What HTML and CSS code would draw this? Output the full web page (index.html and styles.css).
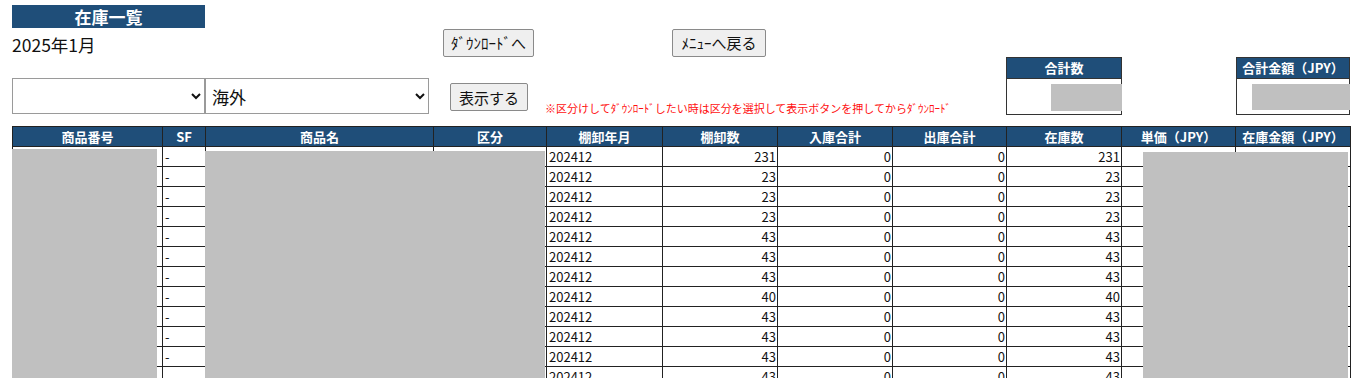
FILE: index.html
```html
<!DOCTYPE html>
<html lang="ja">
<head>
<meta charset="utf-8">
<title>在庫一覧</title>
<link rel="stylesheet" href="styles.css">
</head>
<body>
<div class="page">
  <div class="title">在庫一覧</div>
  <div class="row-date">
    <div class="date">2025年1月</div>
    <button class="btn btn-dl" type="button">ﾀﾞｳﾝﾛｰﾄﾞへ</button>
    <button class="btn btn-menu" type="button">ﾒﾆｭｰへ戻る</button>
  </div>
  <div class="row-filter">
    <div class="filters">
      <select class="sel sel-a"><option></option></select>
      <select class="sel sel-b"><option>海外</option></select>
      <button class="btn btn-show" type="button">表示する</button>
      <span class="note">※区分けしてﾀﾞｳﾝﾛｰﾄﾞしたい時は区分を選択して表示ボタンを押してからﾀﾞｳﾝﾛｰﾄﾞ</span>
    </div>
    <div class="sum sum-qty">
      <div class="sum-head">合計数</div>
      <div class="sum-body"><div class="mask mask-qty"></div></div>
    </div>
    <div class="sum sum-amt">
      <div class="sum-head">合計金額（JPY）</div>
      <div class="sum-body"><div class="mask mask-amt"></div></div>
    </div>
  </div>
  <div class="table-wrap">
    <table class="grid">
      <colgroup>
        <col class="c-code"><col class="c-sf"><col class="c-name"><col class="c-kbn">
        <col class="c-ym"><col class="c-n"><col class="c-n"><col class="c-n2">
        <col class="c-n"><col class="c-n2"><col class="c-n">
      </colgroup>
      <thead>
        <tr>
          <th>商品番号</th><th>SF</th><th>商品名</th><th>区分</th><th>棚卸年月</th><th>棚卸数</th>
          <th>入庫合計</th><th>出庫合計</th><th>在庫数</th><th>単価（JPY）</th><th>在庫金額（JPY）</th>
        </tr>
      </thead>
      <tbody>
        <tr><td></td><td>-</td><td></td><td></td><td>202412</td><td class="r">231</td><td class="r">0</td><td class="r">0</td><td class="r">231</td><td></td><td></td></tr>
        <tr><td></td><td>-</td><td></td><td></td><td>202412</td><td class="r">23</td><td class="r">0</td><td class="r">0</td><td class="r">23</td><td></td><td></td></tr>
        <tr><td></td><td>-</td><td></td><td></td><td>202412</td><td class="r">23</td><td class="r">0</td><td class="r">0</td><td class="r">23</td><td></td><td></td></tr>
        <tr><td></td><td>-</td><td></td><td></td><td>202412</td><td class="r">23</td><td class="r">0</td><td class="r">0</td><td class="r">23</td><td></td><td></td></tr>
        <tr><td></td><td>-</td><td></td><td></td><td>202412</td><td class="r">43</td><td class="r">0</td><td class="r">0</td><td class="r">43</td><td></td><td></td></tr>
        <tr><td></td><td>-</td><td></td><td></td><td>202412</td><td class="r">43</td><td class="r">0</td><td class="r">0</td><td class="r">43</td><td></td><td></td></tr>
        <tr><td></td><td>-</td><td></td><td></td><td>202412</td><td class="r">43</td><td class="r">0</td><td class="r">0</td><td class="r">43</td><td></td><td></td></tr>
        <tr><td></td><td>-</td><td></td><td></td><td>202412</td><td class="r">40</td><td class="r">0</td><td class="r">0</td><td class="r">40</td><td></td><td></td></tr>
        <tr><td></td><td>-</td><td></td><td></td><td>202412</td><td class="r">43</td><td class="r">0</td><td class="r">0</td><td class="r">43</td><td></td><td></td></tr>
        <tr><td></td><td>-</td><td></td><td></td><td>202412</td><td class="r">43</td><td class="r">0</td><td class="r">0</td><td class="r">43</td><td></td><td></td></tr>
        <tr><td></td><td>-</td><td></td><td></td><td>202412</td><td class="r">43</td><td class="r">0</td><td class="r">0</td><td class="r">43</td><td></td><td></td></tr>
        <tr><td></td><td>-</td><td></td><td></td><td>202412</td><td class="r">43</td><td class="r">0</td><td class="r">0</td><td class="r">43</td><td></td><td></td></tr>
        <tr><td></td><td>-</td><td></td><td></td><td>202412</td><td class="r">43</td><td class="r">0</td><td class="r">0</td><td class="r">43</td><td></td><td></td></tr>
      </tbody>
    </table>
    <div class="mask mask-col1"></div>
    <div class="mask mask-col3"></div>
    <div class="mask mask-col10"></div>
  </div>
</div>
</body>
</html>
```

FILE: styles.css
```css
html, body {
  margin: 0;
  padding: 0;
  overflow: hidden;
  background: #fff;
}
body {
  font-family: "Noto Sans CJK JP", "Noto Sans", sans-serif;
  color: #111;
}
.page {
  padding: 5px 12px 0 12px;
  width: 1338px;
}
.title {
  width: 193px;
  height: 23px;
  line-height: 23px;
  background: #1f4e79;
  color: #fff;
  font-weight: bold;
  font-size: 17px;
  text-align: center;
}
.row-date {
  display: flex;
  align-items: center;
  height: 29px;
}
.date {
  width: 431px;
  font-size: 17.5px;
  padding-top: 4px;
}
.btn {
  font-family: "Noto Sans CJK JP", sans-serif;
  font-size: 15px;
  height: 28px;
  padding: 0;
  background: #efefef;
  border: 1px solid #8a8a8a;
  border-radius: 2px;
  color: #111;
}
.btn-dl { width: 91px; }
.btn-menu { width: 94px; margin-left: 138px; }
.row-filter {
  display: flex;
  align-items: flex-start;
  height: 58px;
}
.filters {
  flex: 1;
  display: flex;
  align-items: flex-start;
  margin-top: 21px;
}
.sel {
  height: 36px;
  font-family: "Noto Sans CJK JP", sans-serif;
  font-size: 17px;
  border: 1px solid #9a9a9a;
  border-radius: 0;
  background: #fff;
  color: #111;
  padding: 0 2px;
  margin: 0;
}
.sel-a { width: 193px; }
.sel-b { width: 224px; }
.btn-show {
  width: 78px;
  margin-left: 21px;
  margin-top: 5px;
}
.note {
  margin-left: 17px;
  margin-top: 22px;
  font-size: 11px;
  color: #ff1010;
  white-space: nowrap;
}
.sum {
  height: 56px;
  border: 1px solid #333;
}
.sum-qty { width: 114px; }
.sum-amt { width: 112px; margin-left: 114px; }
.sum-head {
  height: 20px;
  line-height: 20px;
  background: #1f4e79;
  color: #fff;
  font-weight: bold;
  font-size: 13px;
  text-align: center;
  border-bottom: 1px solid #333;
  white-space: nowrap;
}
.sum-body {
  display: flex;
  justify-content: flex-end;
  padding-top: 5px;
}
.mask { background: #c0c0c0; }
.mask-qty { width: 71px; height: 27px; margin-right: -1px; }
.mask-amt { width: 98px; height: 26px; margin-right: -1px; }
.table-wrap {
  position: relative;
  margin-top: 11px;
}
.grid {
  border-collapse: collapse;
  table-layout: fixed;
  width: 1338px;
  font-size: 13px;
}
.c-code { width: 150px; }
.c-sf { width: 43px; }
.c-name { width: 228px; }
.c-kbn { width: 113px; }
.c-ym { width: 116px; }
.c-n { width: 115px; }
.c-n2 { width: 114px; }
.grid th {
  background: #1f4e79;
  color: #fff;
  font-weight: bold;
  height: 19px;
  line-height: 18px;
  padding: 0;
  border: 1px solid #222;
  text-align: center;
  white-space: nowrap;
}
.grid td {
  height: 19px;
  line-height: 18px;
  padding: 0 1px 0 2px;
  border: 1px solid #222;
  color: #111;
  white-space: nowrap;
  overflow: hidden;
}
.grid td.r { text-align: right; padding: 0 1px 0 0; }
.mask-col1, .mask-col3, .mask-col10 {
  position: absolute;
  bottom: 0;
}
.mask-col1 { left: 0; top: 23px; width: 145px; }
.mask-col3 { left: 193px; top: 25px; width: 340px; }
.mask-col10 { left: 1131px; top: 26px; width: 205px; }
```
